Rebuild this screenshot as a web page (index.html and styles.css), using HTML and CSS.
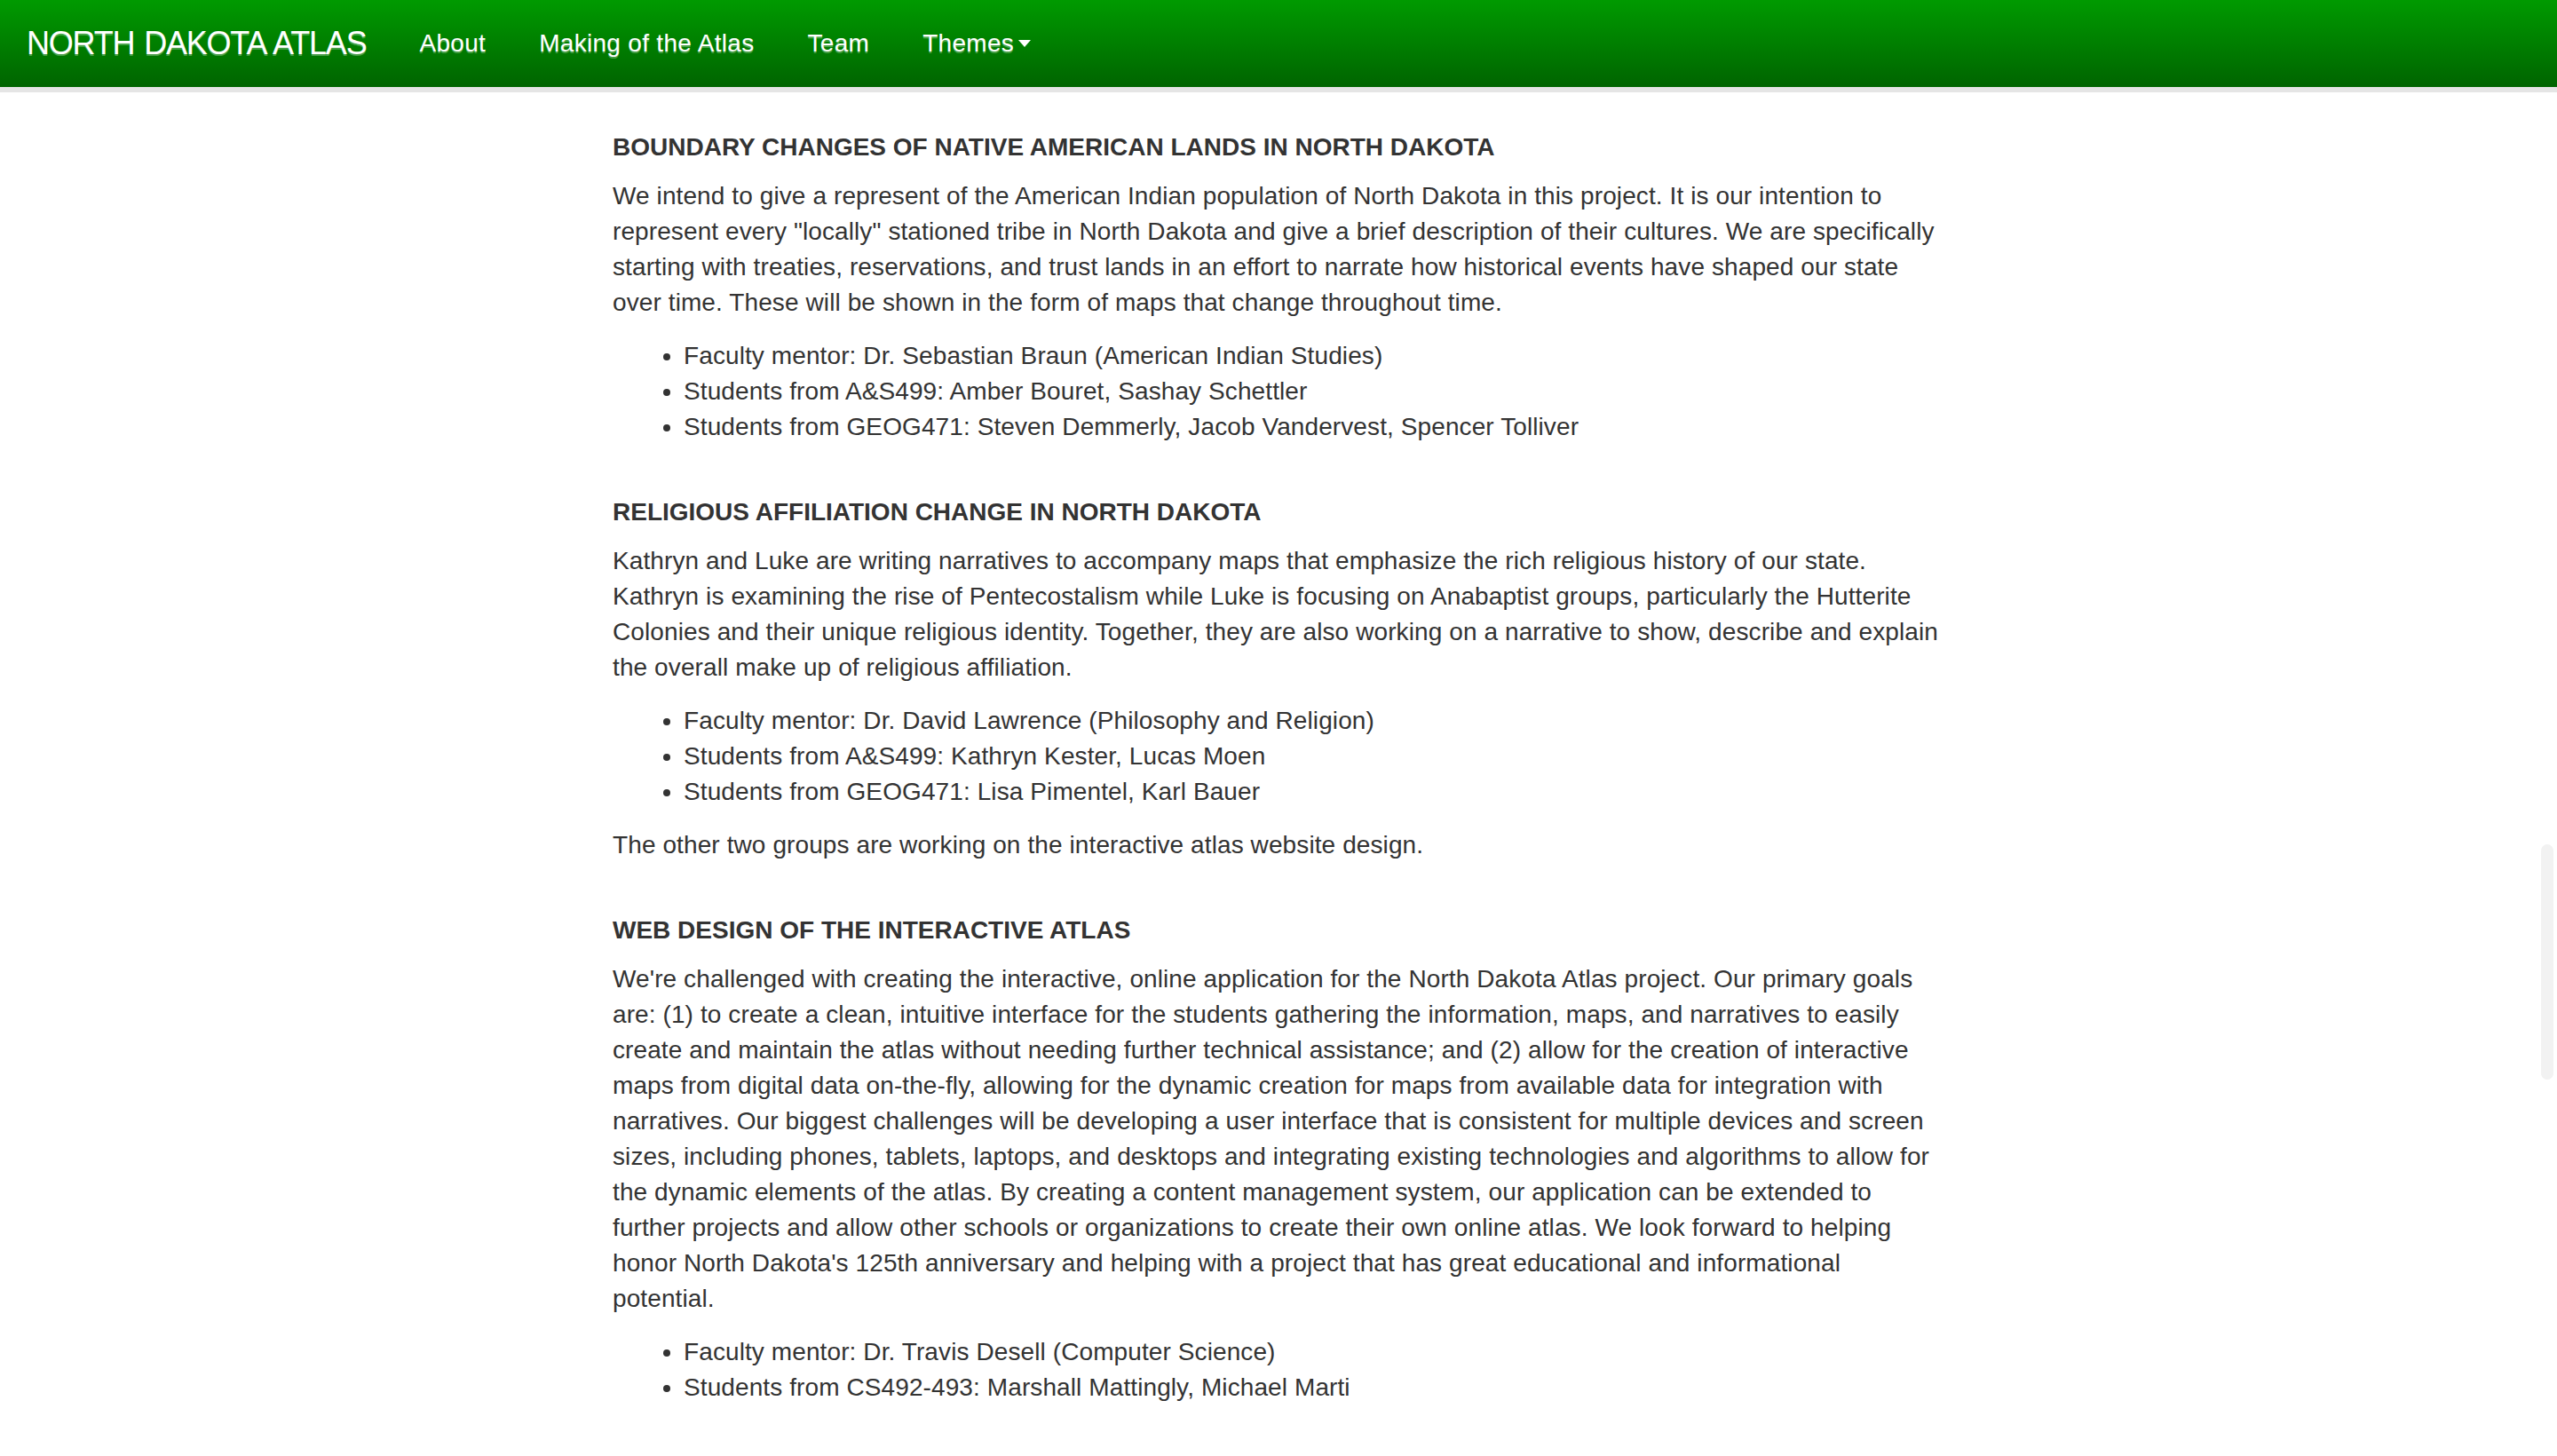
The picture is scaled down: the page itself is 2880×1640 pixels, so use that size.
FILE: index.html
```html
<!DOCTYPE html>
<html lang="en">
<head>
<meta charset="utf-8">
<title>North Dakota Atlas - Team</title>
<link rel="stylesheet" href="styles.css">
</head>
<body>
<nav class="navbar">
  <a class="brand" href="#">NORTH DAKOTA ATLAS</a>
  <ul class="nav">
    <li><a href="#">About</a></li>
    <li><a href="#">Making of the Atlas</a></li>
    <li><a href="#">Team</a></li>
    <li><a href="#">Themes<span class="caret"></span></a></li>
  </ul>
</nav>
<main class="page">
  <section class="group">
    <h5 class="group-title">Boundary Changes of Native American Lands in North Dakota</h5>
    <p>We intend to give a represent of the American Indian population of North Dakota in this project. It is our intention to represent every "locally" stationed tribe in North Dakota and give a brief description of their cultures. We are specifically starting with treaties, reservations, and trust lands in an effort to narrate how historical events have shaped our state over time. These will be shown in the form of maps that change throughout time.</p>
    <ul class="members">
      <li>Faculty mentor: Dr. Sebastian Braun (American Indian Studies)</li>
      <li>Students from A&amp;S499: Amber Bouret, Sashay Schettler</li>
      <li>Students from GEOG471: Steven Demmerly, Jacob Vandervest, Spencer Tolliver</li>
    </ul>
  </section>
  <section class="group">
    <h5 class="group-title">Religious Affiliation Change in North Dakota</h5>
    <p>Kathryn and Luke are writing narratives to accompany maps that emphasize the rich religious history of our state. Kathryn is examining the rise of Pentecostalism while Luke is focusing on Anabaptist groups, particularly the Hutterite Colonies and their unique religious identity. Together, they are also working on a narrative to show, describe and explain the overall make up of religious affiliation.</p>
    <ul class="members">
      <li>Faculty mentor: Dr. David Lawrence (Philosophy and Religion)</li>
      <li>Students from A&amp;S499: Kathryn Kester, Lucas Moen</li>
      <li>Students from GEOG471: Lisa Pimentel, Karl Bauer</li>
    </ul>
    <p>The other two groups are working on the interactive atlas website design.</p>
  </section>
  <section class="group">
    <h5 class="group-title">Web Design of the Interactive Atlas</h5>
    <p>We're challenged with creating the interactive, online application for the North Dakota Atlas project. Our primary goals are: (1) to create a clean, intuitive interface for the students gathering the information, maps, and narratives to easily create and maintain the atlas without needing further technical assistance; and (2) allow for the creation of interactive maps from digital data on-the-fly, allowing for the dynamic creation for maps from available data for integration with narratives. Our biggest challenges will be developing a user interface that is consistent for multiple devices and screen sizes, including phones, tablets, laptops, and desktops and integrating existing technologies and algorithms to allow for the dynamic elements of the atlas. By creating a content management system, our application can be extended to further projects and allow other schools or organizations to create their own online atlas. We look forward to helping honor North Dakota's 125th anniversary and helping with a project that has great educational and informational potential.</p>
    <ul class="members">
      <li>Faculty mentor: Dr. Travis Desell (Computer Science)</li>
      <li>Students from CS492-493: Marshall Mattingly, Michael Marti</li>
    </ul>
  </section>
</main>
<div class="scroll-thumb"></div>
</body>
</html>
```

FILE: styles.css
```css
* { box-sizing: border-box; }

html, body {
  margin: 0;
  padding: 0;
  background: #fff;
}

body {
  font-family: "Liberation Sans", Arial, Helvetica, sans-serif;
  font-size: 28px;
  line-height: 40px;
  color: #333;
  height: 1640px;
  overflow: hidden;
}

.navbar {
  display: flex;
  align-items: flex-start;
  height: 104px;
  padding: 0 0 6px 0;
  background: linear-gradient(to bottom, #009a00 0%, #006400 100%) top / 100% 98px no-repeat, #e5e5e5;
}

.brand {
  display: block;
  padding: 0 30px;
  font-size: 36px;
  letter-spacing: -1.2px;
  word-spacing: 2px;
  line-height: 98px;
  height: 98px;
  color: #fff;
  text-decoration: none;
  text-shadow: 0 2px 0 rgba(255, 255, 255, 0.3);
}

.nav {
  display: flex;
  list-style: none;
  margin: 0;
  padding: 0;
}

.nav a {
  display: flex;
  align-items: center;
  padding: 0 30px;
  height: 98px;
  color: #fff;
  text-decoration: none;
  font-size: 28px;
  letter-spacing: 0.3px;
  text-shadow: 0 2px 0 rgba(255, 255, 255, 0.3);
}

.caret {
  display: inline-block;
  width: 0;
  height: 0;
  margin-left: 5px;
  border-top: 8px solid #fff;
  border-left: 7px solid transparent;
  border-right: 7px solid transparent;
}

.page {
  width: 1500px;
  margin-left: 690px;
  padding-top: 46px;
  letter-spacing: 0.1px;
}

.group-title {
  margin: 60px 0 20px;
  font-size: 28px;
  line-height: 31px;
  font-weight: bold;
  letter-spacing: 0;
  text-transform: uppercase;
  color: #333;
}

.group:first-child .group-title {
  margin-top: 0;
}

p {
  margin: 0 0 20px;
}

.members {
  margin: 0 0 20px;
  padding-left: 80px;
}

.scroll-thumb {
  position: fixed;
  right: 4px;
  top: 951px;
  width: 14px;
  height: 265px;
  border-radius: 7px;
  background: #f2f2f2;
}
```
